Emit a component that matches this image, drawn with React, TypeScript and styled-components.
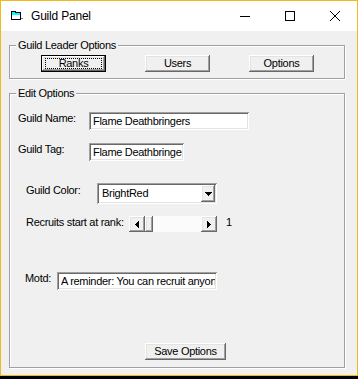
import React from "react";
import styled, { createGlobalStyle, css } from "styled-components";

const GlobalStyle = createGlobalStyle`
    html, body {
        margin: 0;
        padding: 0;
        background: #000;
    }
    body {
        width: 358px;
        height: 379px;
        overflow: hidden;
    }
    * {
        box-sizing: border-box;
    }
`;

const raised = css`
    background: #f0f0f0;
    box-shadow: inset -1px -1px 0 #696969, inset 1px 1px 0 #fff, inset -2px -2px 0 #a0a0a0, inset 2px 2px 0 #e3e3e3;
`;

const sunken = css`
    background: #fff;
    box-shadow: inset 1px 1px 0 #a0a0a0, inset -1px -1px 0 #fff, inset 2px 2px 0 #696969, inset -2px -2px 0 #e3e3e3;
`;

const Window = styled.div`
    width: 358px;
    height: 376px;
    border: 1px solid #f2b91c;
    display: flex;
    flex-direction: column;
    font-family: "Liberation Sans", Arial, sans-serif;
    font-size: 11px;
    line-height: 13px;
    letter-spacing: -0.3px;
    color: #000;
`;

const TitleBar = styled.div`
    height: 30px;
    flex: none;
    background: #fff;
    display: flex;
    align-items: center;
`;

const TitleIcon = styled.svg`
    margin-left: 10px;
    flex: none;
`;

const TitleText = styled.span`
    flex: 1;
    margin-left: 8px;
    font-size: 12px;
    line-height: 14px;
    letter-spacing: -0.2px;
`;

const CaptionButtons = styled.div`
    display: flex;
    height: 100%;
`;

const CaptionButton = styled.div`
    width: 45px;
    height: 100%;
    display: flex;
    align-items: center;
    justify-content: center;
`;

const Client = styled.div`
    flex: 1;
    background: #f0f0f0;
    padding: 14px 0 0 8px;
    display: flex;
    flex-direction: column;
`;

const Group = styled.div<{ $gap?: number }>`
    position: relative;
    width: 336px;
    margin-top: ${props => props.$gap ?? 0}px;
    border: 1px solid #a0a0a0;
    box-shadow: inset 1px 1px 0 #fff, 1px 1px 0 #fff;
`;

const Caption = styled.span`
    position: absolute;
    top: -7px;
    left: 6px;
    padding: 0 2px;
    background: #f0f0f0;
    white-space: nowrap;
`;

const ButtonRow = styled.div`
    display: flex;
    justify-content: space-between;
    padding: 9px 30px 6px 31px;
`;

const Button = styled.div<{ $width: number; $default?: boolean }>`
    ${raised};
    width: ${props => props.$width}px;
    height: 17px;
    display: flex;
    align-items: center;
    justify-content: center;
    flex: none;
    white-space: nowrap;
    ${props =>
        props.$default &&
        css`
            border: 1px solid #000;
        `}
`;

const FocusRect = styled.span`
    flex: 1;
    align-self: stretch;
    margin: 2px 3px;
    border: 1px dotted #000;
    display: flex;
    align-items: center;
    justify-content: center;
    line-height: 9px;
`;

const EditBody = styled.div`
    display: flex;
    flex-direction: column;
    padding: 0 0 7px 0;
`;

const Row = styled.div<{ $indent: number; $gap: number }>`
    display: flex;
    align-items: flex-start;
    margin-top: ${props => props.$gap}px;
    padding-left: ${props => props.$indent}px;
`;

const Label = styled.span<{ $width: number; $offset?: number }>`
    width: ${props => props.$width}px;
    flex: none;
    margin-top: ${props => props.$offset ?? 0}px;
    white-space: nowrap;
`;

const TextBox = styled.input<{ $width: number }>`
    ${sunken};
    width: ${props => props.$width}px;
    height: 18px;
    border: none;
    outline: none;
    margin: 0;
    padding: 0 2px 0 4px;
    font: inherit;
    letter-spacing: inherit;
    color: #000;
`;

const Combo = styled.div`
    ${sunken};
    width: 120px;
    height: 21px;
    padding: 2px;
    display: flex;
`;

const ComboText = styled.span`
    flex: 1;
    padding-left: 3px;
    display: flex;
    align-items: center;
`;

const ComboButton = styled.div`
    ${raised};
    width: 14px;
    display: flex;
    align-items: center;
    justify-content: center;
`;

const ScrollBar = styled.div`
    width: 88px;
    height: 16px;
    display: flex;
    background: #fbfbfb;
`;

const ScrollArrow = styled.div`
    ${raised};
    width: 16px;
    height: 16px;
    display: flex;
    align-items: center;
    justify-content: center;
`;

const ScrollThumb = styled.div`
    ${raised};
    width: 8px;
    height: 16px;
`;

const ScrollTrack = styled.div`
    flex: 1;
`;

const Value = styled.span`
    margin-left: 9px;
`;

const SaveRow = styled.div`
    margin-top: 53px;
    padding-left: 135px;
    display: flex;
`;

const DownArrow = () => (
    <svg width="7" height="4" shapeRendering="crispEdges">
        <rect x="0" y="0" width="7" height="1" fill="#000" />
        <rect x="1" y="1" width="5" height="1" fill="#000" />
        <rect x="2" y="2" width="3" height="1" fill="#000" />
        <rect x="3" y="3" width="1" height="1" fill="#000" />
    </svg>
);

const SideArrow = ({ left }: { left?: boolean }) => (
    <svg width="4" height="7" shapeRendering="crispEdges" style={left ? undefined : { transform: "scaleX(-1)" }}>
        <rect x="0" y="3" width="1" height="1" fill="#000" />
        <rect x="1" y="2" width="1" height="3" fill="#000" />
        <rect x="2" y="1" width="1" height="5" fill="#000" />
        <rect x="3" y="0" width="1" height="7" fill="#000" />
    </svg>
);

export default function App() {
    return (
        <>
            <GlobalStyle />
            <Window>
                <TitleBar>
                    <TitleIcon width="12" height="10" viewBox="0 0 12 10" shapeRendering="crispEdges">
                        <rect x="0.5" y="1.5" width="9" height="7" fill="#fff" stroke="#000" />
                        <path d="M0.5 1.5 V0.5 H4.5 V1.5" fill="#0ff" stroke="#000" />
                        <rect x="1" y="2" width="8" height="2" fill="#0ff" />
                        <rect x="10" y="7" width="2" height="1" fill="#808080" />
                    </TitleIcon>
                    <TitleText>Guild Panel</TitleText>
                    <CaptionButtons>
                        <CaptionButton>
                            <svg width="10" height="10" shapeRendering="crispEdges">
                                <rect x="0" y="5" width="10" height="1" fill="#000" />
                            </svg>
                        </CaptionButton>
                        <CaptionButton>
                            <svg width="10" height="10" shapeRendering="crispEdges">
                                <rect x="0.5" y="0.5" width="9" height="9" fill="none" stroke="#000" />
                            </svg>
                        </CaptionButton>
                        <CaptionButton>
                            <svg width="10" height="10">
                                <path d="M0 0 L10 10 M10 0 L0 10" stroke="#000" strokeWidth="1" />
                            </svg>
                        </CaptionButton>
                    </CaptionButtons>
                </TitleBar>
                <Client>
                    <Group>
                        <Caption>Guild Leader Options</Caption>
                        <ButtonRow>
                            <Button $width={65} $default>
                                <FocusRect>Ranks</FocusRect>
                            </Button>
                            <Button $width={65}>Users</Button>
                            <Button $width={65}>Options</Button>
                        </ButtonRow>
                    </Group>
                    <Group $gap={14}>
                        <Caption>Edit Options</Caption>
                        <EditBody>
                            <Row $indent={8} $gap={18}>
                                <Label $width={71}>Guild Name:</Label>
                                <TextBox $width={160} readOnly value="Flame Deathbringers" />
                            </Row>
                            <Row $indent={8} $gap={13}>
                                <Label $width={71}>Guild Tag:</Label>
                                <TextBox $width={95} readOnly value="Flame Deathbringers" />
                            </Row>
                            <Row $indent={16} $gap={22}>
                                <Label $width={71} $offset={1}>
                                    Guild Color:
                                </Label>
                                <Combo>
                                    <ComboText>BrightRed</ComboText>
                                    <ComboButton>
                                        <DownArrow />
                                    </ComboButton>
                                </Combo>
                            </Row>
                            <Row $indent={16} $gap={12}>
                                <Label $width={103}>Recruits start at rank:</Label>
                                <ScrollBar>
                                    <ScrollArrow>
                                        <SideArrow left />
                                    </ScrollArrow>
                                    <ScrollThumb />
                                    <ScrollTrack />
                                    <ScrollArrow>
                                        <SideArrow />
                                    </ScrollArrow>
                                </ScrollBar>
                                <Value>1</Value>
                            </Row>
                            <Row $indent={15} $gap={40}>
                                <Label $width={32}>Motd:</Label>
                                <TextBox $width={160} readOnly value="A reminder: You can recruit anyone" />
                            </Row>
                            <SaveRow>
                                <Button $width={81}>Save Options</Button>
                            </SaveRow>
                        </EditBody>
                    </Group>
                </Client>
            </Window>
        </>
    );
}
